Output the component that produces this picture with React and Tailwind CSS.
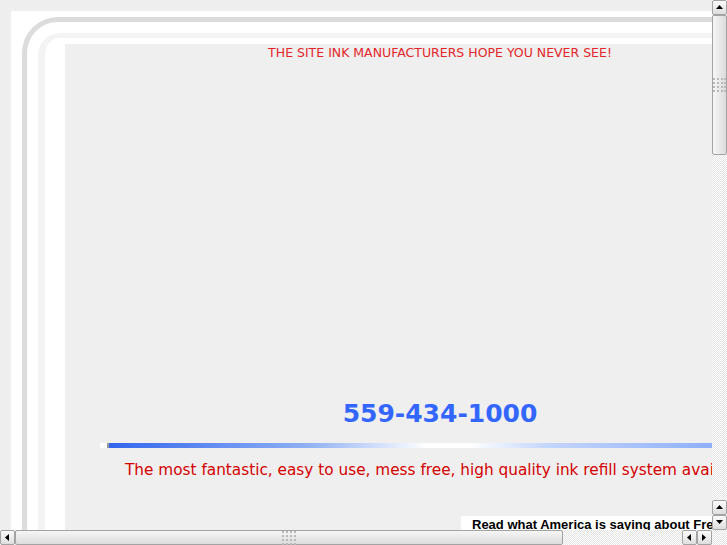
import React from 'react';

const TRACK = "bg-[repeating-conic-gradient(#e4e4e4_0%_25%,#ffffff_0%_50%)] bg-[length:2px_2px]";

function Arrow({ dir }) {
  const pts = {
    up: '1,6 4.5,2 8,6',
    down: '1,2 4.5,6 8,2',
    left: '6,1 2,4.5 6,8',
    right: '2,1 6,4.5 2,8',
  }[dir];
  return (
    <svg width="9" height="9" viewBox="0 0 9 9">
      <polygon points={pts} fill="#000" />
    </svg>
  );
}

function SbButton({ dir }) {
  return (
    <div className="w-[15px] h-[15px] shrink-0 flex items-center justify-center border border-[#a3a3a3] rounded-[2px] bg-gradient-to-b from-[#fbfbfb] to-[#dedede]">
      <Arrow dir={dir} />
    </div>
  );
}

function Grip() {
  return (
    <div className="grid grid-cols-4 gap-[2px]">
      {Array.from({ length: 16 }).map((_, i) => (
        <div key={i} className="w-[2px] h-[2px] bg-[#b9b9b9]" />
      ))}
    </div>
  );
}

export default function App() {
  return (
    <div className="w-[727px] h-[545px] flex flex-col bg-[#eeeeee] overflow-hidden font-['DejaVu_Sans',sans-serif]">
      <div className="flex flex-1 min-h-0">
        {/* page */}
        <div className="flex-1 min-w-0 overflow-hidden pt-[11px] pl-[11px]">
          <div className="bg-white h-full pl-[11px] pt-[6px]">
            <div className="h-full border-l-[5px] border-t-[5px] border-[#dcdcdc] rounded-tl-[36px] pl-[11px] pt-[11px]">
              <div className="h-full border-l-[7px] border-t-[5px] border-[#f3f3f3] rounded-tl-[22px] pl-[20px] pt-[6px]">
                <div className="h-full w-[750px] bg-[#efefef] flex flex-col">
                  <p className="shrink-0 text-center text-[12.5px] leading-[15px] text-[#e3262b] mt-[1px]">
                    THE SITE INK MANUFACTURERS HOPE YOU NEVER SEE!
                  </p>
                  <div className="shrink-0 h-[339px]" />
                  <p className="shrink-0 text-center text-[25px] leading-[30px] font-bold text-[#3366ff]">
                    559-434-1000
                  </p>
                  <div className="shrink-0 flex mt-[14px] ml-[35px] h-[5px]">
                    <div className="w-[7px] bg-white" />
                    <div className="w-[2px] bg-[#999999]" />
                    <div className="flex-1 bg-[linear-gradient(to_right,#3366ee_0%,#8fb0f3_28%,#ffffff_45%,#ffffff_51%,#c4d6fb_62%,#8fb0fb_85%,#9ab8fb_100%)]" />
                  </div>
                  <p className="shrink-0 mt-[12px] ml-[60px] whitespace-nowrap text-[15.3px] leading-[20px] text-[#d40000]">
                    The most fantastic, easy to use, mess free, high quality ink refill system available anywhere!
                  </p>
                  <div className="shrink-0 mt-[36px] ml-[396px] bg-white pl-[11px] pt-[1px] h-[20px]">
                    <p className="whitespace-nowrap font-['Liberation_Sans',sans-serif] font-bold text-[13px] leading-[15px] text-black">
                      Read what America is saying about FreeRefills!
                    </p>
                  </div>
                </div>
              </div>
            </div>
          </div>
        </div>
        {/* vertical scrollbar */}
        <div className={`w-[15px] flex flex-col ${TRACK}`}>
          <SbButton dir="up" />
          <div className="h-[140px] shrink-0 border border-[#a3a3a3] rounded-[2px] bg-gradient-to-r from-[#f6f6f6] to-[#dcdcdc] flex items-center justify-center">
            <Grip />
          </div>
          <div className="flex-1" />
          <SbButton dir="up" />
          <SbButton dir="down" />
        </div>
      </div>
      {/* horizontal scrollbar */}
      <div className={`h-[15px] flex ${TRACK}`}>
        <SbButton dir="left" />
        <div className="w-[548px] shrink-0 border border-[#a3a3a3] rounded-[2px] bg-gradient-to-b from-[#f6f6f6] to-[#dcdcdc] flex items-center justify-center">
          <Grip />
        </div>
        <div className="flex-1" />
        <SbButton dir="left" />
        <SbButton dir="right" />
        <div className="w-[15px] shrink-0" />
      </div>
    </div>
  );
}
